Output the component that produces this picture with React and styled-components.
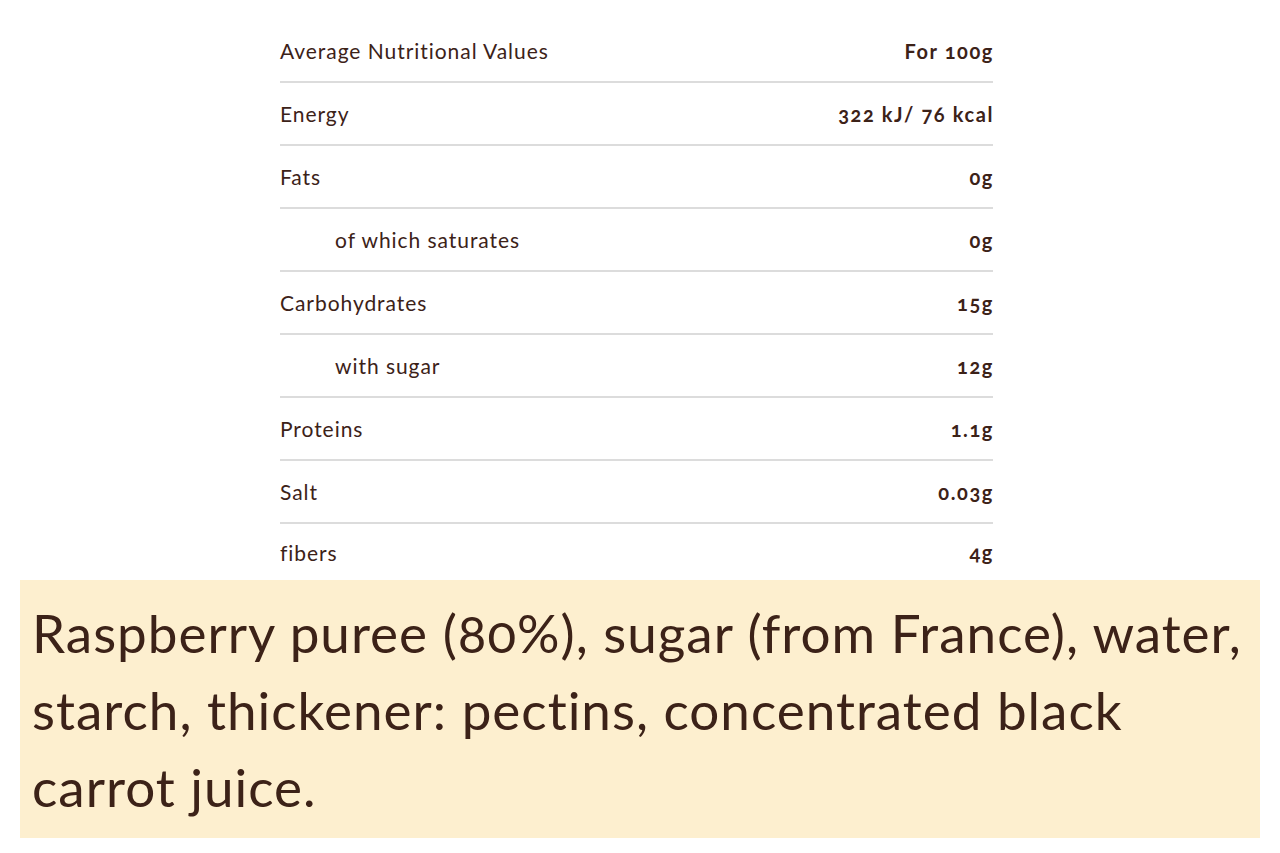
import styled, { createGlobalStyle } from "styled-components";

const GlobalStyle = createGlobalStyle`
  body {
    margin: 0;
    background: #fff;
    font-family: Lato, "Open Sans", sans-serif;
    color: #3c2218;
  }
`;

const Page = styled.div`
  width: 1280px;
  height: 853px;
  display: flex;
  flex-direction: column;
  align-items: flex-start;
`;

const Table = styled.div`
  width: 713px;
  margin: 20px 0 0 280px;
  display: flex;
  flex-direction: column;
`;

const Row = styled.div`
  display: flex;
  align-items: center;
  justify-content: space-between;
  box-sizing: border-box;
  height: ${(p) => (p.$last ? "56px" : "63px")};
  border-bottom: ${(p) => (p.$last ? "none" : "2px solid #dcdcdc")};
`;

const Label = styled.span`
  font-size: 21px;
  letter-spacing: 0.95px;
  padding-left: ${(p) => (p.$sub ? "55px" : "0")};
`;

const Value = styled.span`
  font-size: 20px;
  font-weight: 700;
  letter-spacing: 1.6px;
  margin-right: -1px;
  font-variant-numeric: oldstyle-nums;
`;

const Ingredients = styled.div`
  width: 1240px;
  margin-left: 20px;
  box-sizing: border-box;
  background: #fdefcf;
  padding: 14px 12px 13px;
  font-size: 53px;
  letter-spacing: 1px;
  line-height: 77px;
  white-space: nowrap;
  font-variant-numeric: oldstyle-nums;
`;

const rows = [
  ["Average Nutritional Values", "For 100g"],
  ["Energy", "322 kJ/ 76 kcal"],
  ["Fats", "0g"],
  ["of which saturates", "0g", true],
  ["Carbohydrates", "15g"],
  ["with sugar", "12g", true],
  ["Proteins", "1.1g"],
  ["Salt", "0.03g"],
  ["fibers", "4g"],
];

export default function App() {
  return (
    <Page>
      <GlobalStyle />
      <Table>
        {rows.map(([label, value, sub], i) => (
          <Row key={label} $last={i === rows.length - 1}>
            <Label $sub={sub}>{label}</Label>
            <Value>{value}</Value>
          </Row>
        ))}
      </Table>
      <Ingredients>
        Raspberry puree (80%), sugar (from France), water,
        <br />
        starch, thickener: pectins, concentrated black
        <br />
        carrot juice.
      </Ingredients>
    </Page>
  );
}
